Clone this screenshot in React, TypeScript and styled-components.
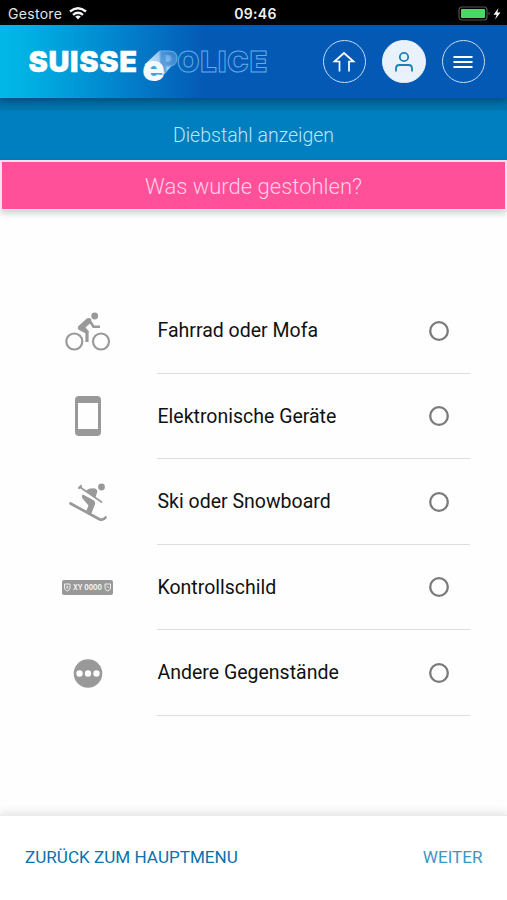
import React from "react";
import styled, { createGlobalStyle } from "styled-components";

const GlobalStyle = createGlobalStyle`
  * { box-sizing: border-box; }
  body { margin: 0; background: #fefefe; font-family: Roboto, "Liberation Sans", sans-serif; }
  button { font: inherit; padding: 0; cursor: pointer; }
`;

const Screen = styled.div`
  width: 507px;
  height: 900px;
  display: flex;
  flex-direction: column;
  overflow: hidden;
  background: #fefefe;
`;

const StatusBar = styled.div`
  height: 25px;
  flex: none;
  display: grid;
  grid-template-columns: 1fr auto 1fr;
  align-items: center;
  padding: 2px 4px 0 8px;
  background: #000;
  color: #e4e4e4;
  font: 400 14px/22px Inter, sans-serif;
`;

const Carrier = styled.div`
  display: flex;
  align-items: center;
  gap: 7px;
  letter-spacing: 0.3px;
`;

const Clock = styled.div`
  font-weight: 600;
  font-size: 14px;
  letter-spacing: 0.35px;
  color: #f2f2f2;
`;

const Battery = styled.div`
  display: flex;
  justify-content: flex-end;
`;

const Header = styled.header`
  height: 73px;
  flex: none;
  display: flex;
  align-items: center;
  justify-content: space-between;
  padding: 0 22px 0 24px;
  background: linear-gradient(90deg, #00b9e8 0, #00b2e4 24px, #0288cf 110px, #0459b4 205px, #0459b4 100%);
  box-shadow: 0 2px 8px 1px rgba(0, 45, 80, 0.6);
  z-index: 2;
`;

const LogoDrawing = styled.svg`
  display: block;
  overflow: visible;
`;

const Actions = styled.nav`
  display: flex;
  gap: 16px;
`;

const RoundButton = styled.button<{ $filled?: boolean }>`
  width: 43.5px;
  height: 43.5px;
  display: grid;
  place-items: center;
  border-radius: 50%;
  border: 1.5px solid ${(p) => (p.$filled ? "#e9f1fb" : "#c4ddf7")};
  background: ${(p) => (p.$filled ? "#e9f1fb" : "transparent")};
`;

const TitleBar = styled.div`
  height: 62px;
  flex: none;
  padding-top: 13px;
  display: flex;
  align-items: center;
  justify-content: center;
  background: linear-gradient(#0075af 0, #0075af 12px, #007fc0 13px);
  color: #b9e6fb;
  font-size: 19.5px;
  font-weight: 300;
`;

const Question = styled.h1`
  height: 50px;
  flex: none;
  margin: 0;
  padding-top: 1px;
  display: flex;
  align-items: center;
  justify-content: center;
  border: solid #f6dfef;
  border-width: 2px 2px 1px;
  background: #ff5099;
  color: #ffcfe7;
  font-size: 22px;
  font-weight: 300;
  box-shadow: 0 3px 7px rgba(0, 0, 0, 0.2);
`;

const Main = styled.main`
  flex: 1;
  padding: 78px 37px 0 38px;
`;

const List = styled.ul`
  margin: 0;
  padding: 0;
  list-style: none;
`;

const Option = styled.li`
  height: 85.5px;
  display: grid;
  grid-template-columns: 119px 1fr;
`;

const IconCell = styled.div`
  display: grid;
  padding-right: 20px;
  place-items: center;
`;

const OptionBody = styled.label`
  display: flex;
  align-items: center;
  justify-content: space-between;
  padding: 0.5px 20.5px 0 0.5px;
  border-bottom: 1px solid #dedede;
  color: #111;
  font-size: 19.5px;
`;

const RadioDrawing = styled.svg`
  flex: none;
`;

const Footer = styled.footer`
  height: 85px;
  flex: none;
  display: flex;
  align-items: center;
  justify-content: space-between;
  padding: 0 24.5px 3px 25px;
  border-top: 1px solid #ececec;
  background: #fff;
  box-shadow: 0 -2px 9px rgba(0, 0, 0, 0.12);
`;

const FooterButton = styled.button<{ $muted?: boolean }>`
  && {
    font-size: 17.1px;
  }
  border: 0;
  background: none;
  color: ${(p) => (p.$muted ? "#3f95c5" : "#0873ac")};
`;

const Logo = () => (
  <LogoDrawing width="250" height="43" viewBox="24 40.5 250 43" role="img" aria-label="Suisse ePolice">
    <defs>
      <linearGradient id="beam" gradientUnits="userSpaceOnUse" x1="153" y1="70" x2="173" y2="52">
        <stop offset="0" stopColor="#c4e2f7" />
        <stop offset="0.5" stopColor="#9bcaf0" />
        <stop offset="1" stopColor="#5b9fdd" stopOpacity="0.85" />
      </linearGradient>
    </defs>
    <path d="M144.500 65L159 51.500H172C179 52 179 62 173 65L163 76Z" fill="url(#beam)" />
    <ellipse cx="154" cy="71" rx="8.500" ry="8" fill="#4a9edb" />
    <g fontFamily="Inter, sans-serif" fontWeight="900" fontSize="29">
      <text x="28.500" y="72.400" fill="#fff" stroke="#fff" strokeWidth="0.400" textLength="108.500" lengthAdjust="spacing">SUISSE</text>
      <g stroke="#66aae8" strokeWidth="1" fontSize="28.500">
        <text x="158.700" y="72.200" fill="#1f74c8" fillOpacity="0.550">P</text>
        <text x="177.300" y="72.200" fill="none" textLength="90" lengthAdjust="spacing">OLICE</text>
      </g>
    </g>
    <text x="142.300" y="81" fill="#f2faff" fontFamily="Inter, sans-serif" fontWeight="900" fontSize="37">e</text>
  </LogoDrawing>
);

const Radio = () => (
  <RadioDrawing width="22" height="22" viewBox="0 0 22 22">
    <circle cx="11" cy="11" r="8.800" fill="none" stroke="#7b7b7b" strokeWidth="2.300" />
  </RadioDrawing>
);

const BikeIcon = () => (
  <svg width="46" height="42" viewBox="65 309.500 46 42" fill="none" stroke="#999" strokeLinejoin="round">
    <circle cx="74.300" cy="341" r="8" strokeWidth="2.200" />
    <circle cx="101" cy="341" r="8" strokeWidth="2.200" />
    <circle cx="94.700" cy="315.500" r="3.400" fill="#999" stroke="none" />
    <path d="M87 330.500V341.500" strokeWidth="3.200" />
    <path d="M89.500 320L93.500 326.300H100" strokeWidth="2.600" />
    <path d="M78 326L86.500 318.200Q89 316.500 91.500 319L90.500 322.500L85.500 327L89 331L86 333L79 329.500Q77 328 78 326Z" fill="#999" stroke="none" />
  </svg>
);

const PhoneIcon = () => (
  <svg width="28" height="42" viewBox="0 0 28 42">
    <path fillRule="evenodd" fill="#999" d="M5 1H23Q27 1 27 5V37Q27 41 23 41H5Q1 41 1 37V5Q1 1 5 1ZM4 8V34H24V8Z" />
  </svg>
);

const SkiIcon = () => (
  <svg width="42" height="42" viewBox="67 480.500 42 42" fill="none" stroke="#999" strokeLinecap="round">
    <circle cx="101.500" cy="486.500" r="3.400" fill="#999" stroke="none" />
    <path d="M80.500 487L101.500 501.500" strokeWidth="1.700" />
    <path d="M79 487.500L81 485.500" strokeWidth="2.200" />
    <path d="M70.500 503L99 518.500Q103 520.500 105.500 517" strokeWidth="2.700" />
    <path d="M86 490Q90 487 95 488Q98 489 97 492L95.500 497Z" fill="#999" stroke="none" />
    <path d="M83 494L94 500Q96 502 94.500 505L91 514L86 511L88.500 505L82.500 498Q81 495 83 494Z" fill="#999" stroke="none" />
  </svg>
);

const PlateIcon = () => (
  <svg width="51" height="15" viewBox="0 0 51 15">
    <rect width="51" height="15" rx="2" fill="#999" />
    <g fill="none" stroke="#eee" strokeWidth="1">
      <path d="M2.500 4H8V8Q8 10 5.250 11Q2.500 10 2.500 8Z" />
      <path d="M43 4H48.500V8Q48.500 10 45.750 11Q43 10 43 8Z" />
      <path d="M5.250 5.500V9M4 7H6.500M44.500 6L47 8" strokeWidth="0.800" />
    </g>
    <text x="11" y="10" fill="#f3f3f3" fontFamily="Inter, sans-serif" fontSize="7" fontWeight="700" textLength="29" lengthAdjust="spacingAndGlyphs">XY 0000</text>
  </svg>
);

const MoreIcon = () => (
  <svg width="30" height="30" viewBox="0 0 30 30">
    <circle cx="15" cy="15.500" r="14.300" fill="#999" />
    <g fill="#fff">
      <circle cx="6.500" cy="15.500" r="3.200" />
      <circle cx="15" cy="15.500" r="3.200" />
      <circle cx="23.500" cy="15.500" r="3.200" />
    </g>
  </svg>
);

const options = [
  { label: "Fahrrad oder Mofa", Icon: BikeIcon },
  { label: "Elektronische Geräte", Icon: PhoneIcon },
  { label: "Ski oder Snowboard", Icon: SkiIcon },
  { label: "Kontrollschild", Icon: PlateIcon },
  { label: "Andere Gegenstände", Icon: MoreIcon },
];

export default function App() {
  return (
    <Screen>
      <GlobalStyle />
      <StatusBar>
        <Carrier>
          <span>Gestore</span>
          <svg width="18" height="13" viewBox="0 0 18 13" fill="none" stroke="#f5f5f5" strokeWidth="2.300">
            <path d="M1 4.500Q9 -2 17 4.500M4 7.800Q9 3.600 14 7.800" />
            <path d="M6.200 9.500Q9 7.300 11.800 9.500L9 12.500Z" fill="#f5f5f5" stroke="none" />
          </svg>
        </Carrier>
        <Clock>09:46</Clock>
        <Battery>
          <svg width="45" height="16" viewBox="0 0 45 16">
            <rect x="1" y="1" width="28" height="13" rx="3" fill="none" stroke="#555" strokeWidth="1.200" />
            <rect x="3" y="3" width="24" height="9" rx="1" fill="#4bd865" />
            <path d="M30.500 5.500Q33 7.500 30.500 9.500Z" fill="#555" />
            <path d="M40.500 2L35.500 8.700H38.700L37 13.500L42.500 6.500H39.300Z" fill="#fff" />
          </svg>
        </Battery>
      </StatusBar>
      <Header>
        <Logo />
        <Actions>
          <RoundButton aria-label="Home">
            <svg width="24" height="22" viewBox="0 0 24 22" fill="none" stroke="#fff" strokeWidth="1.700">
              <path d="M7.500 20.500V10.500H2.500L12 2L21.500 10.500H17V20.500" />
            </svg>
          </RoundButton>
          <RoundButton $filled aria-label="Konto">
            <svg width="20" height="22" viewBox="0 0 20 22" fill="none" stroke="#1d81b2" strokeWidth="1.800">
              <circle cx="10" cy="6" r="4.200" />
              <path d="M2 20.500V17.500Q2 14 5.500 14H14.500Q18 14 18 17.500V20.500" />
            </svg>
          </RoundButton>
          <RoundButton aria-label="Menü">
            <svg width="20" height="14" viewBox="0 0 20 14" stroke="#fff" strokeWidth="1.900">
              <path d="M0.500 2H19.500M0.500 7H19.500M0.500 12H19.500" />
            </svg>
          </RoundButton>
        </Actions>
      </Header>
      <TitleBar>Diebstahl anzeigen</TitleBar>
      <Question>Was wurde gestohlen?</Question>
      <Main>
        <List>
          {options.map(({ label, Icon }) => (
            <Option key={label}>
              <IconCell>
                <Icon />
              </IconCell>
              <OptionBody>
                {label}
                <Radio />
              </OptionBody>
            </Option>
          ))}
        </List>
      </Main>
      <Footer>
        <FooterButton>ZURÜCK ZUM HAUPTMENU</FooterButton>
        <FooterButton $muted>WEITER</FooterButton>
      </Footer>
    </Screen>
  );
}
